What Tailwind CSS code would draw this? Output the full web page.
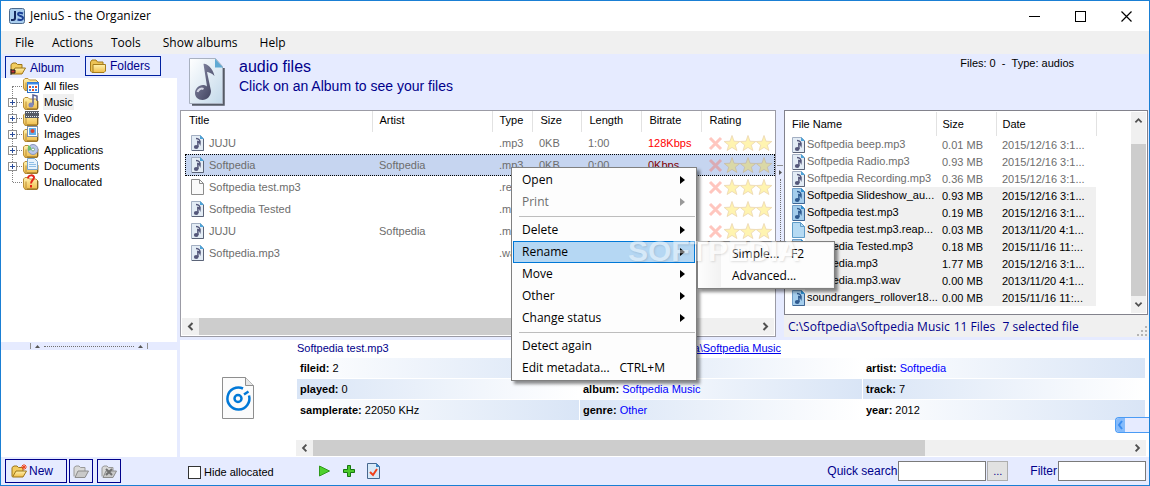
<!DOCTYPE html>
<html lang="en">

<head>
    <meta charset="UTF-8">
    <meta name="viewport" content="width=device-width, initial-scale=1.0">
    <script src="https://cdn.jsdelivr.net/npm/@tailwindcss/browser@4"></script>
    <title>JeniuS - the Organizer</title>
</head>

<body class="relative min-h-screen flex flex-col overflow-hidden bg-[#e6ebff] border border-[#1a7fd4] text-black text-[11px] leading-4 font-['Liberation_Sans',Arial,sans-serif]">

    <!-- icon sprite -->
    <svg class="absolute size-0">
        <defs>
            <linearGradient id="g-paper" x1="0" y1="0" x2="1" y2="1">
                <stop offset="0" stop-color="#fff" /><stop offset="1" stop-color="#c3d9ea" />
            </linearGradient>
            <linearGradient id="g-folder" x1="0" y1="0" x2="0" y2="1">
                <stop offset="0" stop-color="#fff3b0" /><stop offset="1" stop-color="#f0bc48" />
            </linearGradient>
            <linearGradient id="g-note" x1="0" y1="0" x2="1" y2="1">
                <stop offset="0" stop-color="#8d90ac" /><stop offset="1" stop-color="#3a3c58" />
            </linearGradient>
        </defs>
        <symbol id="i-note" viewBox="0 0 36 48">
            <path d="M34.500 10v36.500H3" fill="none" stroke="#555b66" stroke-width="2.500" />
            <path d="M.5.5h26l7 8v37H.5z" fill="url(#g-paper)" stroke="#a9b1c0" />
            <path d="M26 .5l8 9h-8z" fill="#5fa9d3" />
            <path d="M14.500 6c2-1 9 3 11 12-3-3-6-4-7.500-4l4 19c0 5-4 9-8.500 9s-7.500-3-7.500-7 3.500-8 8-8c1.500 0 3 .5 4 1.500z" fill="url(#g-note)" />
            <path d="M8.500 34c1-3 4-4 6-3" fill="none" stroke="#d5d7e6" stroke-width="2" />
        </symbol>
        <symbol id="i-note-sm" viewBox="0 0 13 16">
            <path d="M.5.5h9l3 3v12H.5z" fill="#e3ecf5" stroke="#a3afc2" />
            <path d="M12.500 4v11.500H1" fill="none" stroke="#5c6478" />
            <path d="M9 0l4 4H9z" fill="#4da3d8" />
            <path d="M5 3.500c3 0 4.500 2 4 5-.6-1.300-1.500-2-2.200-2l.2 5.500" fill="none" stroke="#54577a" stroke-width="1.500" />
            <ellipse cx="5.200" cy="12" rx="2.300" ry="2" fill="#54577a" />
        </symbol>
        <symbol id="i-page" viewBox="0 0 13 16">
            <path d="M.5.5h8l4 4v11H.5z" fill="#fafafa" stroke="#8c8c8c" />
            <path d="M8.500.5v4h4" fill="none" stroke="#8c8c8c" />
        </symbol>
        <symbol id="i-page-blue" viewBox="0 0 13 16">
            <path d="M.5.5h8l4 4v11H.5z" fill="#b5daf3" stroke="#5f9cc8" />
            <path d="M8.500.5v4h4" fill="none" stroke="#5f9cc8" />
        </symbol>
        <symbol id="i-note-blue" viewBox="0 0 13 16">
            <path d="M.5.5h9l3 3v12H.5z" fill="#a4cdec" stroke="#6f9cc6" />
            <path d="M12.500 4v11.500H1" fill="none" stroke="#3f6593" />
            <path d="M9 0l4 4H9z" fill="#2f8fd0" />
            <path d="M5 3.500c3 0 4.500 2 4 5-.6-1.300-1.500-2-2.200-2l.2 5.500" fill="none" stroke="#2f5a8f" stroke-width="1.500" />
            <ellipse cx="5.200" cy="12" rx="2.300" ry="2" fill="#2f5a8f" />
        </symbol>
        <symbol id="i-folder" viewBox="0 0 16 16">
            <path d="M.5 13V4l1.500-2h4l1.500 2H13v9l-1 1.500H2z" fill="#ecc356" stroke="#a57c1c" />
            <path d="M3 6.500h12.500V13L14 14.500H3z" fill="url(#g-folder)" stroke="#a57c1c" />
        </symbol>
        <symbol id="i-box" viewBox="0 0 16 16">
            <path d="M.5 13V5L2 3.500h3L6.500 5H13l2 2v7l-1 1.500H2z" fill="url(#g-folder)" stroke="#b98f3a" />
            <path d="M3 7.500v8" stroke="#b98f3a" />
            <path d="M14.500 6.500v8.500H4" fill="none" stroke="#86641f" />
        </symbol>
        <symbol id="i-open" viewBox="0 0 16 16">
            <path d="M1 13.500V4.500L3 3h3l1.500 1.500H12V8" fill="#f2cc60" stroke="#9c7519" />
            <path d="M1.500 14L5 8h10.500L12 14z" fill="url(#g-folder)" stroke="#9c7519" />
        </symbol>
        <symbol id="i-open-gray" viewBox="0 0 16 16">
            <path d="M1 13.500V4.500L3 3h3l1.500 1.500H12V8" fill="#d9d9d9" stroke="#999" />
            <path d="M2 14.500L5 8h10.500L12 14.500z" fill="#c9c9c9" stroke="#8c8c8c" />
        </symbol>
        <symbol id="i-rating" viewBox="0 0 64 16">
            <path d="M2 3l11 11M13 3L2 14" stroke="#ff5e48" stroke-width="3" />
            <g fill="#ffe020" stroke="#c98a20" stroke-width=".8">
                <path id="star" d="M24 .5l2 5.700 5.800.3-4.500 3.600 1.600 5.400-4.900-3.100-4.900 3.100 1.600-5.400-4.500-3.600 5.800-.3z" />
                <use href="#star" x="16" />
                <use href="#star" x="32" />
            </g>
        </symbol>
        <symbol id="i-plusbox" viewBox="0 0 9 9">
            <rect x=".5" y=".5" width="8" height="8" fill="#fff" stroke="#919191" />
            <path d="M2 4.500h5M4.500 2v5" stroke="#2a4d9b" />
        </symbol>
        <symbol id="i-left" viewBox="0 0 17 17">
            <path d="M10.500 5L7 8.500l3.500 3.500" fill="none" stroke="#505050" stroke-width="2" />
        </symbol>
        <symbol id="i-right" viewBox="0 0 17 17">
            <path d="M6.500 5L10 8.500 6.500 12" fill="none" stroke="#505050" stroke-width="2" />
        </symbol>
        <symbol id="i-up" viewBox="0 0 17 17">
            <path d="M5 10.500L8.500 7l3.500 3.500" fill="none" stroke="#505050" stroke-width="2" />
        </symbol>
        <symbol id="i-down" viewBox="0 0 17 17">
            <path d="M5 6.500L8.500 10 12 6.500" fill="none" stroke="#505050" stroke-width="2" />
        </symbol>
        <symbol id="i-sub" viewBox="0 0 5 8">
            <path d="M0 0l5 4-5 4z" fill="currentColor" />
        </symbol>
    </svg>

    <!-- title bar -->
    <div class="h-[30px] bg-white flex items-center pl-2 font-['Open_Sans',sans-serif] text-[12px]">
        <svg class="size-4" viewBox="0 0 16 16">
            <rect x=".5" y=".5" width="15" height="15" rx="2" fill="#a9cdee" stroke="#4d6a8c" />
            <path d="M6 3v7q0 2-2 2H2" fill="none" stroke="#14285e" stroke-width="2" />
            <path d="M14 5.500q-5-2-5 .8c0 2 5 1.400 5 3.700q0 3-5.500 1.500" fill="none" stroke="#1b3f94" stroke-width="2" />
        </svg>
        <h1 class="ml-[5px]">JeniuS - the Organizer</h1>
        <div class="ml-auto flex h-full">
            <button aria-label="Minimize" class="w-[46px] grid place-items-center">
                <svg class="w-[11px] h-[11px]" viewBox="0 0 11 11"><path d="M0 5.500h11" stroke="#000" /></svg>
            </button>
            <button aria-label="Maximize" class="w-[46px] grid place-items-center">
                <svg class="w-[11px] h-[11px]" viewBox="0 0 11 11"><rect x=".5" y=".5" width="10" height="10" fill="none" stroke="#000" /></svg>
            </button>
            <button aria-label="Close" class="w-[46px] grid place-items-center">
                <svg class="w-[11px] h-[11px]" viewBox="0 0 11 11"><path d="M.5.5l10 10M10.500.5l-10 10" stroke="#000" stroke-width="1.200" /></svg>
            </button>
        </div>
    </div>

    <!-- menu bar -->
    <nav class="h-[23px] bg-[#f0f0f0] flex items-center gap-[18px] pl-[14px] font-['Open_Sans',sans-serif] text-[12px]">
        <button>File</button>
        <button>Actions</button>
        <button>Tools</button>
        <button class="ml-1">Show albums</button>
        <button class="ml-1">Help</button>
    </nav>

    <div class="flex-1 flex">
        <!-- album tree -->
        <aside class="w-[176px] shrink-0 mr-[3px] flex flex-col">
            <div class="h-6 flex pt-[2px] pl-1 gap-[5px] text-[12px] text-[#00008b]">
                <button class="w-[75px] flex items-center gap-1 pl-1 border-t border-l border-[#0020a0]">
                    <svg class="size-4" viewBox="0 0 16 16"><use href="#i-open" /><path d="M1 9v6M1 10h4v3H1" stroke="#222" fill="#c33" /></svg>
                    Album
                </button>
                <button class="w-[76px] h-5 flex items-center gap-1 pl-1 border border-[#0020a0]">
                    <svg class="size-4"><use href="#i-folder" /></svg>
                    Folders
                </button>
            </div>
            <ul id="albums" class="relative h-[264px] bg-white before:absolute before:left-[11px] before:top-2 before:h-[96px] before:border-l before:border-dotted before:border-[#808080]"></ul>
            <div class="h-2 flex items-center justify-center gap-1 pr-px">
                <span class="h-[6px] w-px bg-[#909090]"></span>
                <svg class="w-[5px] h-[3px]" viewBox="0 0 5 3"><path d="M0 3l2.500-3L5 3z" fill="#555" /></svg>
                <span class="w-[90px] border-t border-dotted border-[#707070]"></span>
                <svg class="w-[5px] h-[3px]" viewBox="0 0 5 3"><path d="M0 3l2.500-3L5 3z" fill="#555" /></svg>
                <span class="h-[6px] w-px bg-[#909090]"></span>
            </div>
            <div class="flex-1 bg-white"></div>
        </aside>

        <main class="flex-1 min-w-0 flex flex-col">
            <header class="h-14 flex pl-[9px] text-[#00008b]">
                <svg class="w-9 h-12 mt-1"><use href="#i-note" /></svg>
                <div class="ml-[14px] pt-[3px]">
                    <h2 class="text-[16px] leading-5">audio files</h2>
                    <p class="text-[14px] leading-[18px]">Click on an Album to see your files</p>
                </div>
                <p class="ml-auto mr-[75px] pt-px text-black">Files: 0 &nbsp;- &nbsp;Type: audios</p>
            </header>

            <div class="h-[227px] flex">
                <!-- album contents -->
                <section class="flex-1 min-w-0 flex flex-col bg-white border border-[#9b9ba5]">
                    <div class="flex-1 pl-1">
                        <table class="w-full table-fixed text-left text-[#6d6d6d]">
                            <colgroup>
                                <col class="w-[187px]">
                                <col class="w-[120px]">
                                <col class="w-[40px]">
                                <col class="w-[49px]">
                                <col class="w-[60px]">
                                <col class="w-[60px]">
                                <col>
                            </colgroup>
                            <thead class="text-black">
                                <tr class="h-[21px]">
                                    <th class="font-normal pb-[3px] pl-1 border-r border-[#e2e2e2]">Title</th>
                                    <th class="font-normal pb-[3px] pl-[7px] border-r border-[#e2e2e2]">Artist</th>
                                    <th class="font-normal pb-[3px] pl-[7px] border-r border-[#e2e2e2]">Type</th>
                                    <th class="font-normal pb-[3px] pl-2 border-r border-[#e2e2e2]">Size</th>
                                    <th class="font-normal pb-[3px] pl-2 border-r border-[#e2e2e2]">Length</th>
                                    <th class="font-normal pb-[3px] pl-2 border-r border-[#e2e2e2]">Bitrate</th>
                                    <th class="font-normal pb-[3px] pl-2">Rating</th>
                                </tr>
                            </thead>
                            <tbody id="tracks"></tbody>
                        </table>
                    </div>
                    <div class="h-[17px] mb-px mx-px flex bg-[#f0f0f0]">
                        <button aria-label="Scroll left" class="size-[17px]"><svg class="size-[17px]"><use href="#i-left" /></svg></button>
                        <span class="flex-1"><span class="block w-3/5 h-full bg-[#cdcdcd]"></span></span>
                        <button aria-label="Scroll right" class="size-[17px]"><svg class="size-[17px]"><use href="#i-right" /></svg></button>
                    </div>
                </section>

                <div class="w-2 flex flex-col items-center justify-center gap-1">
                    <span class="w-[6px] h-px bg-[#909090]"></span>
                    <svg class="w-[3px] h-[5px]" viewBox="0 0 3 5"><path d="M0 0l3 2.500L0 5z" fill="#555" /></svg>
                    <span class="h-[90px] border-l border-dotted border-[#707070]"></span>
                    <svg class="w-[3px] h-[5px]" viewBox="0 0 3 5"><path d="M0 0l3 2.500L0 5z" fill="#555" /></svg>
                    <span class="w-[6px] h-px bg-[#909090]"></span>
                </div>

                <!-- files on disk -->
                <section class="w-[365px] flex flex-col">
                    <div class="flex-1 flex bg-white border border-[#82828c] mr-px">
                        <div class="flex-1 pt-px">
                            <table class="w-full table-fixed text-left text-[#6d6d6d]">
                                <colgroup>
                                    <col class="w-[151px]">
                                    <col class="w-[60px]">
                                    <col class="w-[100px]">
                                    <col>
                                </colgroup>
                                <thead class="text-black">
                                    <tr class="h-6">
                                        <th class="font-normal pl-[7px] border-r border-[#e2e2e2]">File Name</th>
                                        <th class="font-normal pl-[6px] border-r border-[#e2e2e2]">Size</th>
                                        <th class="font-normal pl-[6px] border-r border-[#e2e2e2]">Date</th>
                                        <th></th>
                                    </tr>
                                </thead>
                                <tbody id="files"></tbody>
                            </table>
                        </div>
                        <div class="w-[15px] my-px mr-px flex flex-col bg-[#f0f0f0]">
                            <button aria-label="Scroll up" class="h-[17px]"><svg class="w-[15px] h-[17px]"><use href="#i-up" /></svg></button>
                            <span class="flex-1 mt-[15px] bg-[#cdcdcd]"></span>
                            <button aria-label="Scroll down" class="h-[17px]"><svg class="w-[15px] h-[17px]"><use href="#i-down" /></svg></button>
                        </div>
                    </div>
                    <div class="h-[22px] flex items-center gap-1 pl-1 pt-[2px] bg-[#f0f0f0] text-[#00008b] text-[12px] font-['Open_Sans',sans-serif]">
                        <span>C:\Softpedia\Softpedia Music</span>
                        <span>11 Files</span>
                        <span>&nbsp;7 selected file</span>
                        <svg class="size-3 ml-auto mr-px self-end" viewBox="0 0 12 12">
                            <path d="M9 1h2v2H9zM9 5h2v2H9zM9 9h2v2H9zM5 5h2v2H5zM5 9h2v2H5zM1 9h2v2H1z" fill="#b5b5b5" />
                        </svg>
                    </div>
                </section>
            </div>

            <!-- file details -->
            <section class="relative flex-1 mt-[3px] bg-white flex">
                <div class="w-[116px] flex justify-center items-start pt-[37px]">
                    <svg class="w-8 h-[42px]" viewBox="0 0 32 42">
                        <path d="M.5.5h23l8 8v33H.5z" fill="#fbfbfb" stroke="#8e8e8e" />
                        <path d="M23.500.5v8h8" fill="#e6e6e6" stroke="#8e8e8e" />
                        <path d="M21 11.500a11 11 0 1 0 6 7" fill="none" stroke="#0078d7" stroke-width="2.500" />
                        <path d="M22 17.500l4.500-3" stroke="#0078d7" stroke-width="2.500" />
                        <circle cx="16" cy="21.500" r="3.500" fill="none" stroke="#0078d7" stroke-width="2.500" />
                    </svg>
                </div>
                <div class="flex-1 min-w-0 mr-[3px] flex flex-col">
                    <div class="h-[17px] flex pl-px">
                        <span class="flex-1 text-[#00008b]">Softpedia test.mp3</span>
                        <a href="#" class="mr-[365px] text-[#0000ee] underline">C:\Softpedia\Softpedia Music</a>
                    </div>
                    <table class="w-full table-fixed border-separate border-spacing-px">
                        <tr class="h-5">
                            <td class="pl-[3px] bg-linear-to-r from-white to-[#d9e5f6]"><b>fileid:</b> 2</td>
                            <td class="pl-[3px] bg-linear-to-r from-[#d9e5f6] to-white"></td>
                            <td class="pl-[3px] bg-linear-to-r from-white to-[#d9e5f6]"><b>artist:</b> <span class="text-[#0000ff]">Softpedia</span></td>
                        </tr>
                        <tr class="h-5">
                            <td class="pl-[3px] bg-linear-to-r from-[#d9e5f6] to-white"><b>played:</b> 0</td>
                            <td class="pl-[3px] bg-linear-to-r from-white to-[#d9e5f6]"><b>album:</b> <span class="text-[#0000ff]">Softpedia Music</span></td>
                            <td class="pl-[3px] bg-linear-to-r from-[#d9e5f6] to-white"><b>track:</b> 7</td>
                        </tr>
                        <tr class="h-5">
                            <td class="pl-[3px] bg-linear-to-r from-white to-[#d9e5f6]"><b>samplerate:</b> 22050 KHz</td>
                            <td class="pl-[3px] bg-linear-to-r from-[#d9e5f6] to-white"><b>genre:</b> <span class="text-[#0000ff]">Other</span></td>
                            <td class="pl-[3px] bg-linear-to-r from-white to-[#d9e5f6]"><b>year:</b> 2012</td>
                        </tr>
                    </table>
                    <div class="h-4 mt-auto mb-px flex bg-[#f0f0f0]">
                        <button aria-label="Scroll left" class="w-[17px]"><svg class="w-[17px] h-4"><use href="#i-left" /></svg></button>
                        <span class="flex-1"><span class="block w-3/4 h-full bg-[#cdcdcd]"></span></span>
                        <button aria-label="Scroll right" class="w-[17px]"><svg class="w-[17px] h-4"><use href="#i-right" /></svg></button>
                    </div>
                </div>
                <button aria-label="Expand panel" class="absolute right-0 top-[77px] w-[34px] h-4 rounded-l-[4px] border border-r-0 border-[#4a9bf5] bg-[#e6ebff] overflow-hidden">
                    <svg class="w-[9px] h-[14px] bg-[#85bbfb]" viewBox="0 0 9 14"><path d="M6 3L3 7l3 4" fill="none" stroke="#3b8df0" stroke-width="2" /></svg>
                </button>
            </section>
        </main>
    </div>

    <!-- bottom toolbar -->
    <footer class="h-7 flex items-center pl-1 pr-[3px] text-[12px] text-[#00008b]">
        <button class="w-[62px] h-6 flex items-center gap-[2px] pl-[5px] border border-[#00008b]">
            <svg class="size-4" viewBox="0 0 16 16"><use href="#i-open" /><path d="M13 1v6M10 4h6M11 2l4 4M15 2l-4 4" stroke="#f0451e" /></svg>
            New
        </button>
        <button aria-label="Edit album" class="w-6 h-6 ml-[2px] grid place-items-center border border-[#00008b]">
            <svg class="size-4"><use href="#i-open-gray" /></svg>
        </button>
        <button aria-label="Delete album" class="w-6 h-6 ml-1 grid place-items-center border border-[#00008b]">
            <svg class="size-4" viewBox="0 0 16 16"><use href="#i-open-gray" /><path d="M5 6l6 6M11 6l-6 6" stroke="#707070" stroke-width="2" /></svg>
        </button>
        <label class="ml-[67px] pt-[2px] flex items-center gap-[3px] text-[11px] text-black">
            <input type="checkbox" class="appearance-none size-[13px] bg-white border border-[#333]">
            Hide allocated
        </label>
        <button aria-label="Play" class="ml-11">
            <svg class="size-3" viewBox="0 0 12 12"><path d="M1.500 1l10 5-10 5z" fill="#4fd12d" stroke="#2f9a1b" /></svg>
        </button>
        <button aria-label="Add" class="ml-[13px]">
            <svg class="size-3" viewBox="0 0 12 12"><path d="M4.500.5h3v4h4v3h-4v4h-3v-4h-4v-3h4z" fill="#4bc92a" stroke="#17780f" /></svg>
        </button>
        <button aria-label="Mark as checked" class="ml-3">
            <svg class="w-[13px] h-4" viewBox="0 0 13 16"><path d="M.5.5h9l3 3v12H.5z" fill="#d8e9f8" stroke="#47678f" /><path d="M9 0l4 4H9z" fill="#3d86c4" /><path d="M3 9l3 3 4-6" fill="none" stroke="#f0401a" stroke-width="2" /></svg>
        </button>
        <label for="quick-search" class="ml-auto mr-px">Quick search</label>
        <input id="quick-search" type="text" class="w-[88px] h-5 bg-white border border-[#7a7a7a]">
        <button class="w-[21px] h-5 ml-px bg-[#e1e1e1] border border-[#adadad] text-[11px] leading-4">...</button>
        <label for="filter" class="ml-[22px] mr-px">Filter</label>
        <input id="filter" type="text" class="w-[88px] h-5 bg-white border border-[#7a7a7a]">
    </footer>

    <!-- context menu -->
    <div class="absolute left-[510px] top-[166px] w-[186px] p-px bg-[#fdfdfd] border border-[#808080] shadow-[3px_3px_3px_rgba(0,0,0,0.45)] text-[12px] font-['Open_Sans',sans-serif]">
        <button class="w-full h-[22px] flex items-center pl-[9px] pr-[10px]">Open<svg class="w-[5px] h-2 ml-auto"><use href="#i-sub" /></svg></button>
        <button class="w-full h-[22px] flex items-center pl-[9px] pr-[10px] text-[#6d6d6d]" disabled>Print<svg class="w-[5px] h-2 ml-auto text-[#999]"><use href="#i-sub" /></svg></button>
        <hr class="mt-[3px] mb-[2px] ml-[6px] border-t border-[#bdbdbd]">
        <button class="w-full h-[22px] flex items-center pl-[9px] pr-[10px]">Delete<svg class="w-[5px] h-2 ml-auto"><use href="#i-sub" /></svg></button>
        <button class="w-full h-[22px] flex items-center pl-2 pr-[9px] bg-[#b5d7f3] border border-[#0078d7]">Rename<svg class="w-[5px] h-2 ml-auto"><use href="#i-sub" /></svg></button>
        <button class="w-full h-[22px] flex items-center pl-[9px] pr-[10px]">Move<svg class="w-[5px] h-2 ml-auto"><use href="#i-sub" /></svg></button>
        <button class="w-full h-[22px] flex items-center pl-[9px] pr-[10px]">Other<svg class="w-[5px] h-2 ml-auto"><use href="#i-sub" /></svg></button>
        <button class="w-full h-[22px] flex items-center pl-[9px] pr-[10px]">Change status<svg class="w-[5px] h-2 ml-auto"><use href="#i-sub" /></svg></button>
        <hr class="mt-[3px] mb-[2px] ml-[6px] border-t border-[#bdbdbd]">
        <button class="w-full h-[22px] flex items-center pl-[9px]">Detect again</button>
        <button class="w-full h-[22px] flex items-center pl-[9px] pr-[30px]">Edit metadata...<span class="ml-auto">CTRL+M</span></button>
    </div>

    <!-- rename submenu -->
    <div class="absolute left-[696px] top-[240px] w-[138px] p-px bg-linear-to-r from-[#fdfdfd] from-[1px] to-[#f2f2f2] to-[23px] border border-[#808080] shadow-[3px_3px_3px_rgba(0,0,0,0.45)] text-[12px] font-['Open_Sans',sans-serif]">
        <div class="ml-[22px] bg-[#fdfdfd]">
            <button class="w-full h-[22px] flex items-center pl-[11px] pr-[29px]">Simple...<span class="ml-auto">F2</span></button>
            <button class="w-full h-[22px] flex items-center pl-[11px]">Advanced...</button>
        </div>
    </div>

    <!-- watermark -->
    <span class="absolute left-[627px] top-[232px] text-[30px] leading-9 font-bold text-white opacity-45 text-shadow-[1px_1px_2px_rgba(0,0,0,0.25)] pointer-events-none">SOFTPEDIA</span>

    <script>
        // name, drawing on top of the folder, has children
        const albums = [
            ["All files", '<rect x="4.500" y="4.500" width="11" height="10" fill="#fff" stroke="#2c6fc4" /><path d="M4 5.500h12" stroke="#3c8ae8" stroke-width="2" /><path d="M6 9h2M12 9h2M9 12h2" stroke="#e0502a" stroke-width="2" /><path d="M9 9h2M6 12h2M12 12h2" stroke="#3c8ae8" stroke-width="2" />', false],
            ["Music", '<path d="M10 11V1l4 1v5" fill="none" stroke="#5a5f93" stroke-width="1.500" /><circle cx="8" cy="11" r="2.500" fill="#8088bb" />', true],
            ["Video", '<path d="M2 1h14v7H2z" fill="#555b66" /><path d="M3 2.500h13M3 6.500h13" stroke="#e8edf5" stroke-dasharray="1 1" />', true],
            ["Images", '<rect x="4.500" y=".5" width="10" height="10" fill="#fff" stroke="#7d8fa8" /><rect x="6" y="2" width="7" height="7" fill="#5fb0ee" /><circle cx="9.500" cy="5" r="2" fill="#e0442e" />', true],
            ["Applications", '<circle cx="10" cy="7.500" r="5" fill="#b9c6ea" stroke="#8b95b8" /><circle cx="10" cy="7.500" r="1.500" fill="#fff" stroke="#7a8" /><path d="M5 3l3 2v3L5 9z" fill="#6fc06a" />', true],
            ["Documents", '<path d="M4.500.5h7l3 3v8h-10z" fill="#e8f3fc" stroke="#7aa6cc" /><path d="M6 4.500h5M6 6.500h7M6 8.500h7" stroke="#8fbfe6" />', true],
            ["Unallocated", '<path d="M5 4.500c0-4 6-4 6-1 0 2.500-3 2.500-3 6M8 11v2.500" fill="none" stroke="#e5261a" stroke-width="2" />', false]
        ];
        const tracks = [
            ["i-note-sm", "JUJU", "", ".mp3", "0KB", "1:00", "128Kbps"],
            ["i-note-sm", "Softpedia", "Softpedia", ".mp3", "0KB", "0:00", "0Kbps"],
            ["i-page", "Softpedia test.mp3", "", ".reap", "", "", ""],
            ["i-note-sm", "Softpedia Tested", "", ".mp3", "", "", ""],
            ["i-note-sm", "JUJU", "Softpedia", ".mp3", "", "", ""],
            ["i-note-sm", "Softpedia.mp3", "", ".wav", "", "", ""]
        ];
        const files = [
            ["i-note-sm", "Softpedia beep.mp3", "0.01 MB", "2015/12/16 3:1..."],
            ["i-note-sm", "Softpedia Radio.mp3", "0.93 MB", "2015/12/16 3:1..."],
            ["i-note-sm", "Softpedia Recording.mp3", "0.36 MB", "2015/12/16 3:1..."],
            ["i-note-blue", "Softpedia Slideshow_au...", "0.93 MB", "2015/12/16 3:1..."],
            ["i-note-blue", "Softpedia test.mp3", "0.19 MB", "2015/12/16 3:1..."],
            ["i-page-blue", "Softpedia test.mp3.reap...", "0.03 MB", "2013/11/20 4:1..."],
            ["i-note-blue", "Softpedia Tested.mp3", "0.18 MB", "2015/11/16 11:..."],
            ["i-note-blue", "Softpedia.mp3", "1.77 MB", "2015/12/16 3:1..."],
            ["i-note-blue", "Softpedia.mp3.wav", "0.00 MB", "2013/11/20 4:1..."],
            ["i-note-blue", "soundrangers_rollover18...", "0.00 MB", "2015/11/16 11:..."]
        ];

        document.getElementById("albums").innerHTML = albums.map(([name, art, open]) => `
            <li class="relative h-4 flex items-center ${open ? "pl-[7px]" : "pl-[12px]"}">
                ${open ? '<svg class="size-[9px]"><use href="#i-plusbox" /></svg>' : ""}
                <span class="${open ? "w-[5px]" : "w-[9px]"} border-t border-dotted border-[#808080]"></span>
                <svg class="size-4 ml-px" viewBox="0 0 16 16"><use href="#i-box" y="${name === "All files" ? -3 : 0}" />${art}</svg>
                <button class="ml-1 px-px ${name === "Music" ? "bg-[#f0f0f0]" : ""}">${name}</button>
            </li>`).join("");

        document.getElementById("tracks").innerHTML = tracks.map(([icon, title, artist, type, size, length, rate], i) => `
            <tr class="h-[22px] ${i === 1 ? "bg-[#c6d5f0] outline outline-dotted outline-black -outline-offset-1" : ""}">
                <td class="pl-[6px]"><span class="flex items-center gap-[5px]"><svg class="w-[13px] h-4"><use href="#${icon}" /></svg>${title}</span></td>
                <td class="pl-[7px]">${artist}</td>
                <td class="pl-[7px]">${type}</td>
                <td class="pl-[7px]">${size}</td>
                <td class="pl-[7px]">${length}</td>
                <td class="pl-[7px] ${i === 1 ? "text-[#800000]" : "text-[#ff0000]"}">${rate}</td>
                <td class="pl-[7px]"><svg class="w-16 h-4 opacity-35"><use href="#i-rating" /></svg></td>
            </tr>`).join("");

        document.getElementById("files").innerHTML = files.map(([icon, name, size, date], i) => {
            const bg = i > 2 ? "bg-[#f0f0f0]" : "";
            return `
            <tr class="h-[17px] ${i > 2 ? "text-black" : ""}">
                <td class="pl-[7px]"><span class="flex items-center"><svg class="w-[13px] h-4 shrink-0"><use href="#${icon}" /></svg><span class="flex-1 min-w-0 leading-[17px] pl-[2px] whitespace-nowrap ${bg}">${name}</span></span></td>
                <td class="pl-[6px] ${bg}">${size}</td>
                <td class="pl-[6px] ${bg}">${date}</td>
                <td></td>
            </tr>`;
        }).join("");
    </script>
</body>

</html>
